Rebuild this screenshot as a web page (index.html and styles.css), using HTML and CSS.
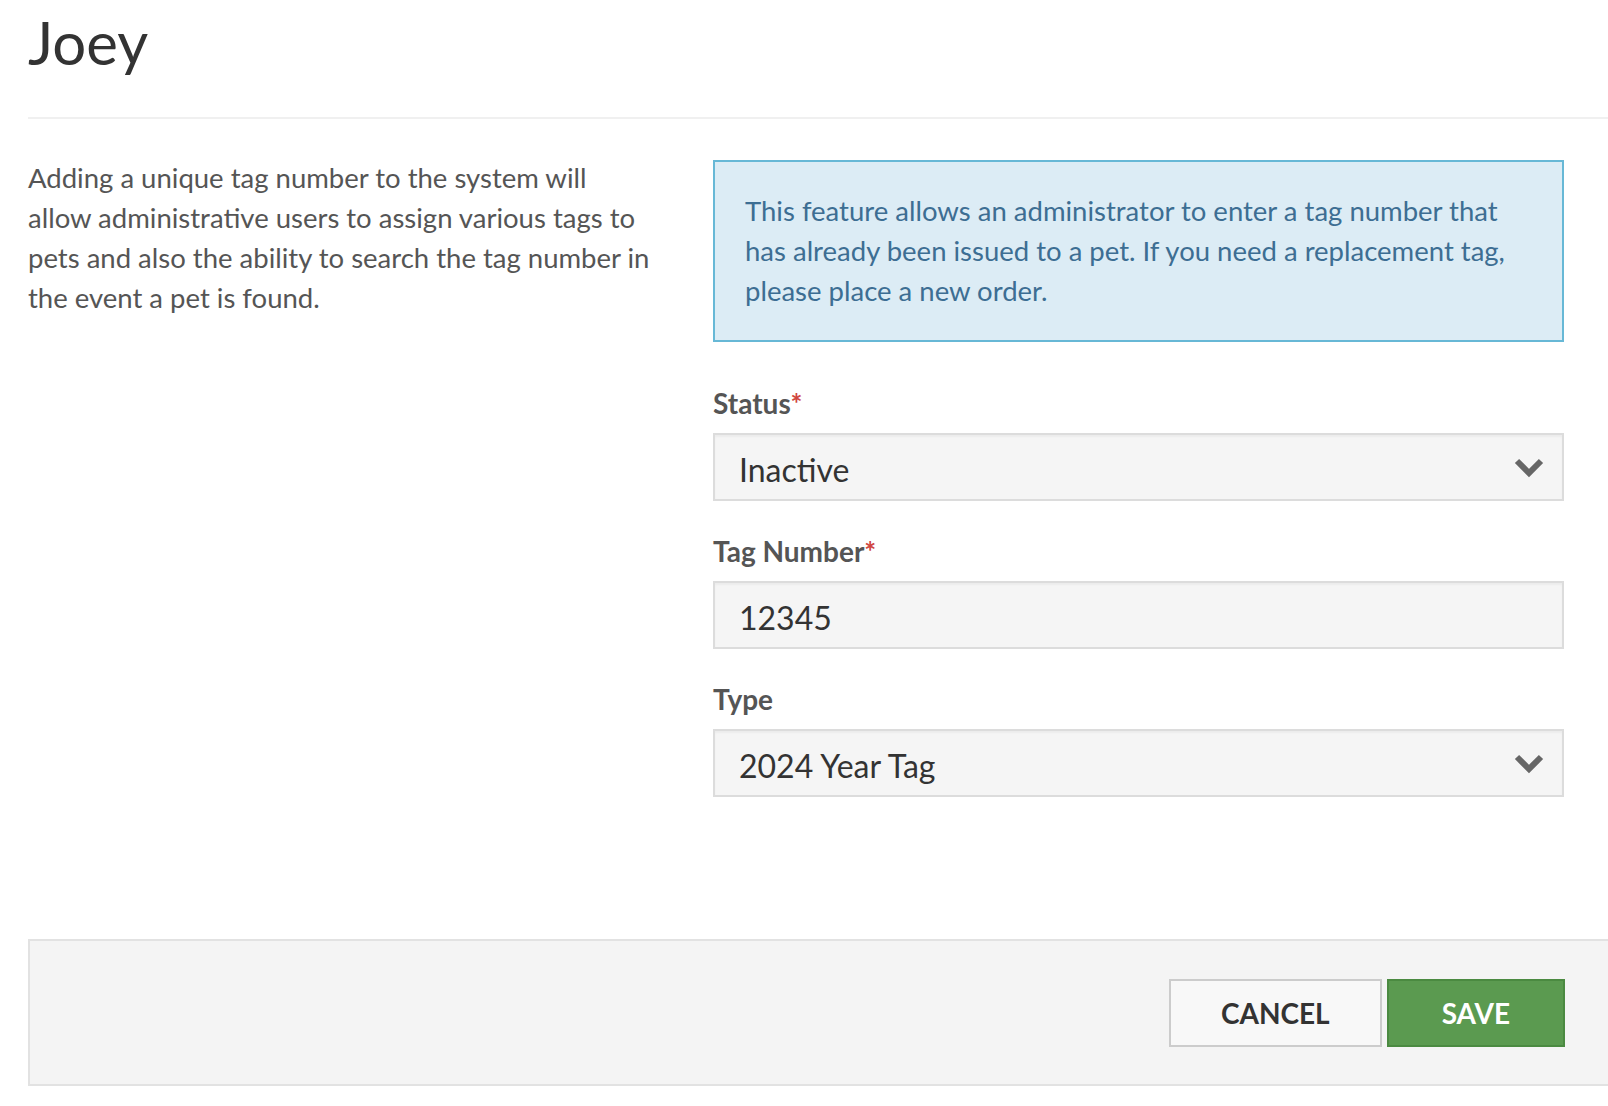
FILE: index.html
```html
<!DOCTYPE html>
<html lang="en">

<head>
  <meta charset="UTF-8">
  <title>Joey - Tag</title>
  <link rel="stylesheet" href="styles.css">
</head>

<body>
  <div class="page">
    <h1 class="pet-name">Joey</h1>
    <hr class="divider">

    <div class="content-row">
      <p class="intro">
        Adding a unique tag number to the system will allow administrative users to assign various tags to pets and also the ability to search the tag number in the event a pet is found.
      </p>

      <div class="tag-form">
        <div class="alert-info">
          This feature allows an administrator to enter a tag number that has already been issued to a pet. If you need a replacement tag, please place a new order.
        </div>

        <div class="form-group">
          <label for="status">Status<span class="required">*</span></label>
          <div class="select-wrap">
            <select id="status">
              <option>Active</option>
              <option selected>Inactive</option>
            </select>
            <svg class="chevron" width="32" height="22" viewBox="0 0 32 22">
              <polyline points="4,4 16,16 28,4" fill="none" stroke="#666" stroke-width="6" />
            </svg>
          </div>
        </div>

        <div class="form-group">
          <label for="tagNumber">Tag Number<span class="required">*</span></label>
          <input type="text" id="tagNumber" value="12345" />
        </div>

        <div class="form-group">
          <label for="tagType">Type</label>
          <div class="select-wrap">
            <select id="tagType">
              <option>2023 Year Tag</option>
              <option selected>2024 Year Tag</option>
            </select>
            <svg class="chevron" width="32" height="22" viewBox="0 0 32 22">
              <polyline points="4,4 16,16 28,4" fill="none" stroke="#666" stroke-width="6" />
            </svg>
          </div>
        </div>
      </div>
    </div>

    <div class="form-footer">
      <button class="btn-cancel">Cancel</button>
      <button class="btn-save">Save</button>
    </div>
  </div>
</body>

</html>
```

FILE: styles.css
```css
body {
  margin: 0;
  background-color: #fff;
  color: #555;
  font-family: Lato, "Open Sans", sans-serif;
  font-size: 27.5px;
  line-height: 40px;
}

.page {
  padding-left: 28px;
}

.pet-name {
  margin: 9px 0 0;
  font-size: 60px;
  line-height: 66px;
  font-weight: 400;
  color: #333;
}

.divider {
  margin: 42px 0 0;
  border: none;
  border-top: 2px solid #f0f0f0;
}

.content-row {
  display: grid;
  grid-template-columns: 624px 1fr;
  column-gap: 61px;
  padding: 41px 44px 0 0;
}

.intro {
  margin: -2px 0 0;
}

.alert-info {
  background-color: #dcecf5;
  border: 2px solid #67b8d6;
  color: #3d6e93;
  padding: 29px 30px;
  margin-bottom: 41px;
}

.form-group {
  margin-bottom: 30px;
}

.form-group:last-child {
  margin-bottom: 0;
}

label {
  display: block;
  font-size: 28px;
  font-weight: 700;
  color: #555;
  margin-bottom: 10px;
}

.required {
  color: #d0463f;
}

.select-wrap {
  position: relative;
}

select,
input {
  display: block;
  width: 100%;
  box-sizing: border-box;
  height: 68px;
  padding: 5px 24px 0;
  border: 2px solid #dcdcdc;
  border-radius: 0;
  background-color: #f5f5f5;
  box-shadow: inset 0 2px 2px rgba(0, 0, 0, 0.04);
  color: #333;
  font-family: Lato, "Open Sans", sans-serif;
  font-size: 32px;
  -webkit-appearance: none;
  appearance: none;
  outline: none;
}

.chevron {
  position: absolute;
  right: 19px;
  top: 24px;
  pointer-events: none;
}

.form-footer {
  display: flex;
  justify-content: flex-end;
  gap: 5px;
  margin-top: 142px;
  padding: 38px 43px 37px 0;
  background-color: #f4f4f4;
  border: 2px solid #e2e2e2;
  border-right: none;
}

button {
  height: 68px;
  padding: 0 50px;
  border: 2px solid #ccc;
  border-radius: 0;
  background-color: #f8f8f8;
  color: #333;
  font-family: Lato, "Open Sans", sans-serif;
  font-size: 28px;
  font-weight: 700;
  text-transform: uppercase;
  cursor: pointer;
}

.btn-save {
  padding: 0 53px;
  background-color: #5b9a50;
  border-color: #4b8a41;
  color: #fff;
}

.btn-save:hover {
  background-color: #4b8a41;
}
```
